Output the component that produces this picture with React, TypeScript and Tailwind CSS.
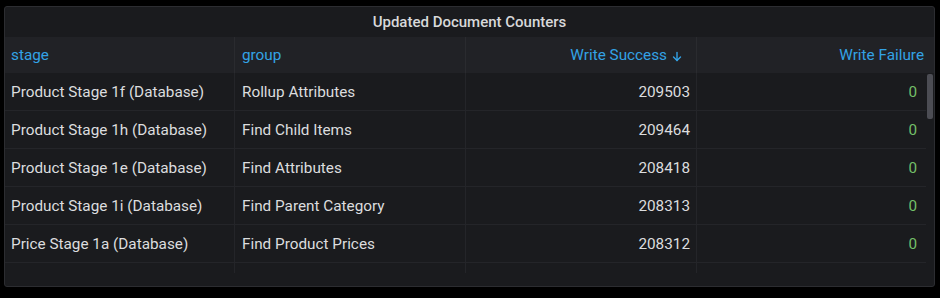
import React from "react";

const rows = [
  ["Product Stage 1f (Database)", "Rollup Attributes", "209503", "0"],
  ["Product Stage 1h (Database)", "Find Child Items", "209464", "0"],
  ["Product Stage 1e (Database)", "Find Attributes", "208418", "0"],
  ["Product Stage 1i (Database)", "Find Parent Category", "208313", "0"],
  ["Price Stage 1a (Database)", "Find Product Prices", "208312", "0"],
];

function SortArrow() {
  return (
    <svg width="10" height="11" viewBox="0 0 10 11" className="ml-[5px] mt-[1px]" fill="none" stroke="#33a2e5" strokeWidth="1.4" strokeLinecap="round" strokeLinejoin="round">
      <path d="M5 1.5v8" />
      <path d="M1.5 6l3.5 3.5L8.5 6" />
    </svg>
  );
}

export default function App() {
  return (
    <div
      className="w-[940px] h-[298px] bg-black pt-[6px] pl-[4px] overflow-hidden"
      style={{ fontFamily: "Roboto, 'Liberation Sans', sans-serif" }}
    >
      <div className="w-[931px] h-[281px] bg-[#1a1b1e] border border-[#2c2d31] rounded-[3px] flex flex-col overflow-hidden">
        <div className="h-[30px] shrink-0 flex items-center justify-center text-[15px] font-medium text-[#d8d9da]">
          Updated Document Counters
        </div>
        <div className="h-[36px] shrink-0 grid grid-cols-[230px_231px_231px_1fr] bg-[#212226] text-[15.3px] text-[#33a2e5]">
          <div className="flex items-center pl-[6px] pt-[1px] border-r border-[#2a2b2f]">stage</div>
          <div className="flex items-center pl-[7px] pt-[1px] border-r border-[#2a2b2f]">group</div>
          <div className="flex items-center justify-end pr-[14px] pt-[1px] border-r border-[#2a2b2f]">
            Write Success
            <SortArrow />
          </div>
          <div className="flex items-center justify-end pr-[10px] pt-[1px]">Write Failure</div>
        </div>
        <div className="flex">
          <div className="w-[922px] flex flex-col">
            {rows.map((r, i) => (
              <div
                key={i}
                className="h-[38px] grid grid-cols-[230px_231px_231px_1fr] border-b border-[#242529] text-[15.3px] text-[#dcdddf]"
              >
                <div className="flex items-center pl-[6px] pt-[1px] border-r border-[#242529]">{r[0]}</div>
                <div className="flex items-center pl-[7px] pt-[1px] border-r border-[#242529]">{r[1]}</div>
                <div className="flex items-center justify-end pr-[6px] pt-[1px] border-r border-[#242529]">{r[2]}</div>
                <div className="flex items-center justify-end pr-[9px] pt-[1px] text-[#73bf69]">{r[3]}</div>
              </div>
            ))}
            <div className="h-[10px] grid grid-cols-[230px_231px_231px_1fr]">
              <div className="border-r border-[#242529]" />
              <div className="border-r border-[#242529]" />
              <div className="border-r border-[#242529]" />
              <div />
            </div>
          </div>
          <div className="w-[8px] pt-[1px] pl-[1px]">
            <div className="w-[6px] h-[45px] rounded-[2px] bg-[#4c4d54]" />
          </div>
        </div>
      </div>
    </div>
  );
}
